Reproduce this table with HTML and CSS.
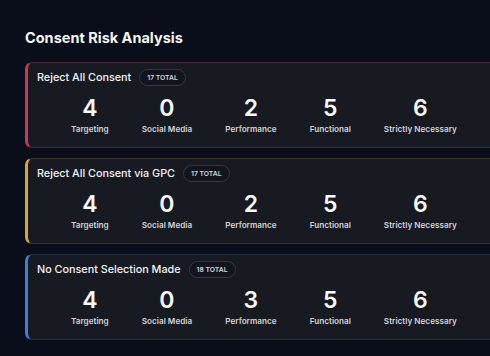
FILE: index.html
```html
<!DOCTYPE html>
<html>
<head>
<meta charset="utf-8">
<link rel="stylesheet" href="styles.css">
</head>
<body>
<main class="page">
  <h1 class="title">Consent Risk Analysis</h1>
  <section class="card card-red">
    <div class="card-head">
      <span class="card-title">Reject All Consent</span>
      <span class="badge">17 TOTAL</span>
    </div>
    <div class="stats">
      <div class="stat"><span class="num">4</span><span class="label">Targeting</span></div>
      <div class="stat"><span class="num">0</span><span class="label">Social Media</span></div>
      <div class="stat"><span class="num">2</span><span class="label">Performance</span></div>
      <div class="stat"><span class="num">5</span><span class="label">Functional</span></div>
      <div class="stat"><span class="num">6</span><span class="label">Strictly Necessary</span></div>
    </div>
  </section>
  <section class="card card-amber">
    <div class="card-head">
      <span class="card-title">Reject All Consent via GPC</span>
      <span class="badge">17 TOTAL</span>
    </div>
    <div class="stats">
      <div class="stat"><span class="num">4</span><span class="label">Targeting</span></div>
      <div class="stat"><span class="num">0</span><span class="label">Social Media</span></div>
      <div class="stat"><span class="num">2</span><span class="label">Performance</span></div>
      <div class="stat"><span class="num">5</span><span class="label">Functional</span></div>
      <div class="stat"><span class="num">6</span><span class="label">Strictly Necessary</span></div>
    </div>
  </section>
  <section class="card card-blue">
    <div class="card-head">
      <span class="card-title">No Consent Selection Made</span>
      <span class="badge">18 TOTAL</span>
    </div>
    <div class="stats">
      <div class="stat"><span class="num">4</span><span class="label">Targeting</span></div>
      <div class="stat"><span class="num">0</span><span class="label">Social Media</span></div>
      <div class="stat"><span class="num">3</span><span class="label">Performance</span></div>
      <div class="stat"><span class="num">5</span><span class="label">Functional</span></div>
      <div class="stat"><span class="num">6</span><span class="label">Strictly Necessary</span></div>
    </div>
  </section>
</main>
</body>
</html>
```
FILE: styles.css
```css
html, body {
  margin: 0;
  padding: 0;
  background: #0a0e1a;
  overflow: hidden;
  width: 490px;
  height: 356px;
}
body {
  font-family: Inter, "Noto Sans", sans-serif;
  color: #f3f4f6;
}
.page {
  padding: 28px 0 0 25px;
  width: 465px;
  overflow: hidden;
}
.title {
  margin: 0 0 14px 0;
  font-size: 14.5px;
  line-height: 20px;
  font-weight: 700;
  color: #f5f6f8;
}
.card {
  box-sizing: border-box;
  width: 480px;
  height: 86px;
  margin-bottom: 10px;
  background: #181a22;
  border: 1px solid #2a2d38;
  border-left-width: 3px;
  border-radius: 7px;
  padding: 6px 0 0 9px;
}
.card-red { border-color: #452632; border-left-color: #c73a52; }
.card-amber { border-color: #3a3226; border-left-color: #dba534; }
.card-blue { border-color: #1f2e47; border-left-color: #3b82d6; }
.card-head {
  display: flex;
  align-items: center;
  gap: 8px;
  height: 17px;
}
.card-title {
  font-size: 10.8px;
  font-weight: 500;
  color: #f1f2f5;
}
.badge {
  box-sizing: border-box;
  height: 17px;
  padding: 0 7px;
  border: 1px solid #333948;
  border-radius: 9px;
  background: #12151d;
  font-size: 6.8px;
  font-weight: 600;
  color: #d4d7de;
  display: flex;
  align-items: center;
}
.stats {
  display: flex;
  gap: 33px;
  margin: 8px 0 0 34px;
}
.stat {
  display: flex;
  flex-direction: column;
  align-items: center;
}
.num {
  font-size: 23px;
  line-height: 28px;
  font-weight: 600;
  color: #f7f8fa;
}
.label {
  margin-top: 1px;
  font-size: 8.2px;
  line-height: 12px;
  font-weight: 600;
  color: #cfd2d9;
}
```
